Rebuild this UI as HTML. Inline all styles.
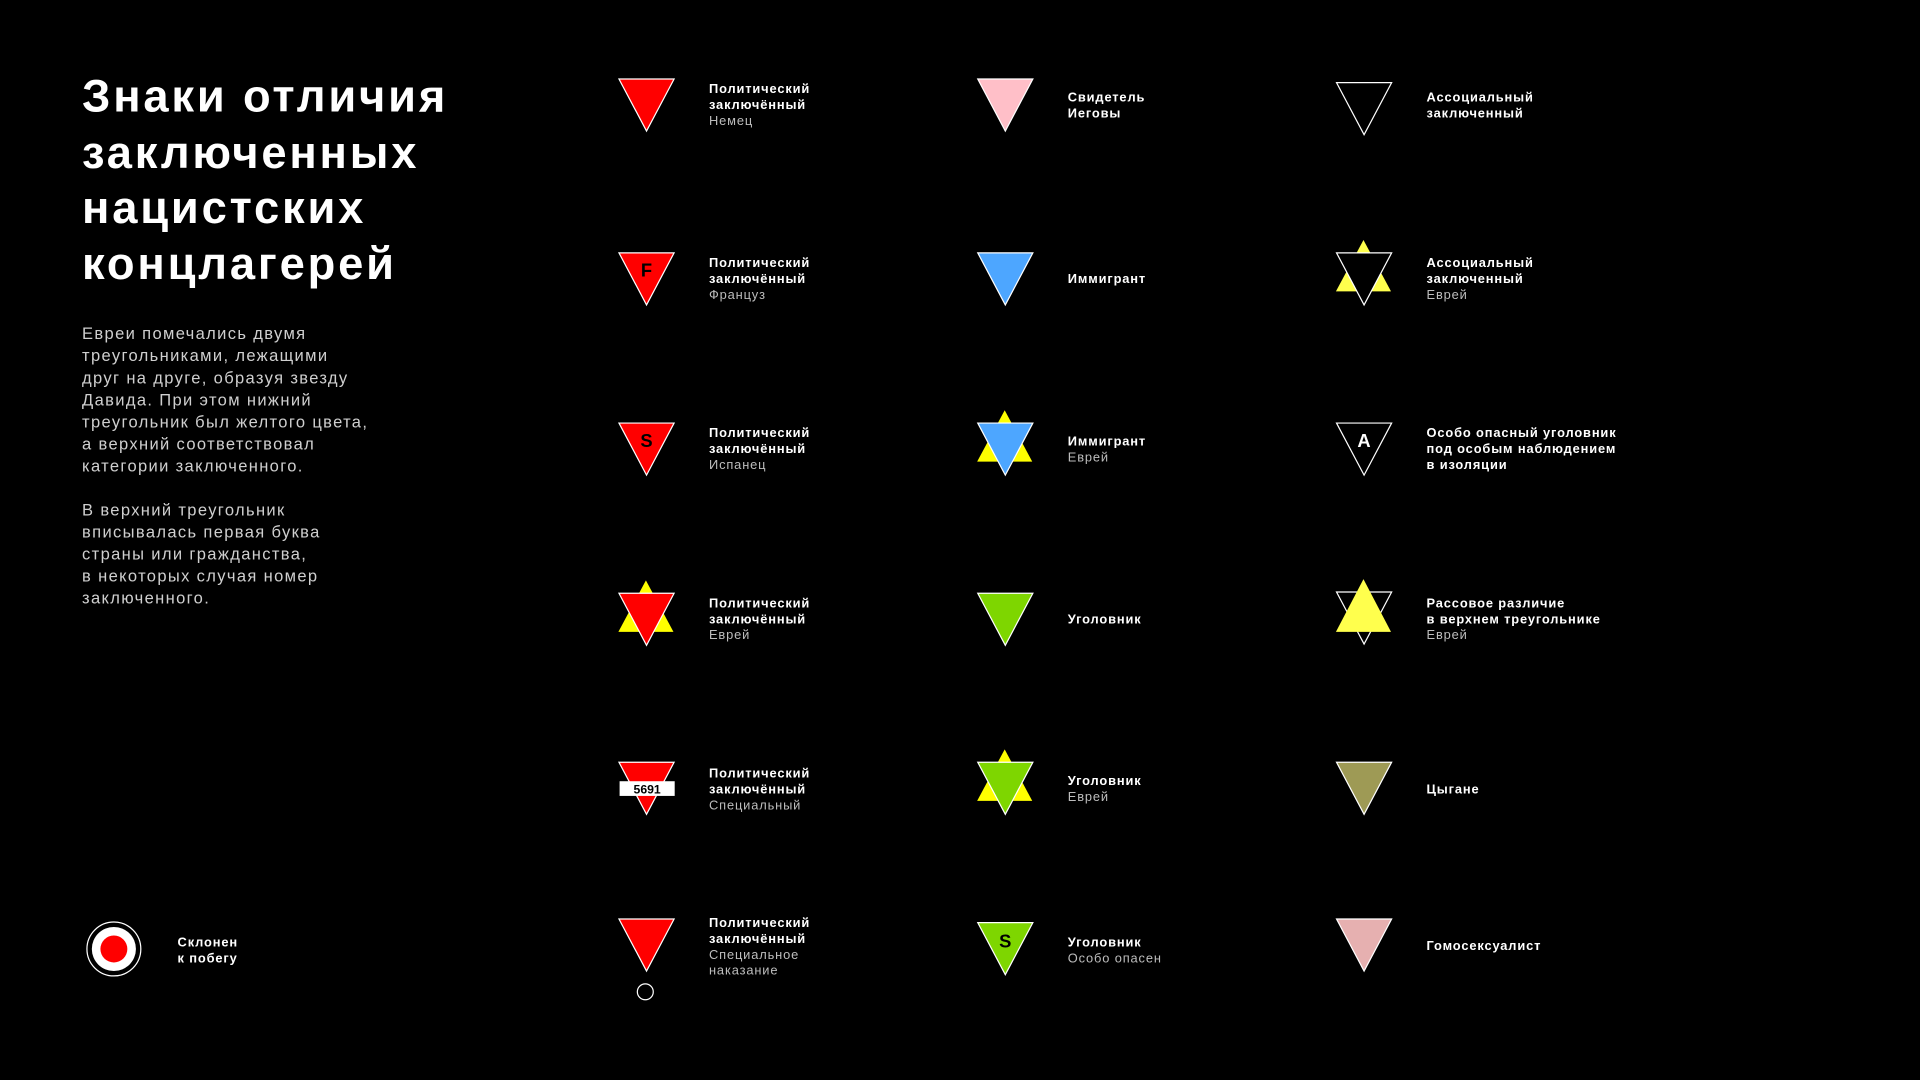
<!DOCTYPE html>
<html><head><meta charset="utf-8"><style>
html,body{margin:0;padding:0;background:#000;width:1920px;height:1080px;overflow:hidden}
#w{position:absolute;left:0;top:0;width:1568px;height:882px;transform:scale(1.22449);transform-origin:0 0;font-family:"Liberation Sans",sans-serif;color:#fff}
h1{position:absolute;left:67px;top:56px;margin:0;font-size:37px;line-height:45.5px;font-weight:bold;letter-spacing:2.3px}
.p{position:absolute;left:67px;font-size:13.5px;line-height:18px;color:#cfcfcf;letter-spacing:1.1px}
.t{position:absolute;font-size:10.5px;line-height:13px;font-weight:bold;letter-spacing:0.7px;margin-top:1px}
.t span{font-weight:normal;color:#bdbdbd}
svg{position:absolute;overflow:visible}
</style></head><body><div id="w">
<h1>Знаки отличия<br>заключенных<br>нацистских<br>концлагерей</h1>
<div class="p" style="top:264px">Евреи помечались двумя<br>треугольниками, лежащими<br>друг на друге, образуя звезду<br>Давида. При этом нижний<br>треугольник был желтого цвета,<br>а верхний соответствовал<br>категории заключенного.</div>
<div class="p" style="top:408px">В верхний треугольник<br>вписывалась первая буква<br>страны или гражданства,<br>в некоторых случая номер<br>заключенного.</div>

<svg style="left:70px;top:752px" width="46" height="46"><circle cx="23" cy="23" r="22" fill="none" stroke="#fff" stroke-width="1"/><circle cx="23" cy="23" r="18" fill="#fff"/><circle cx="23" cy="23" r="11" fill="#f00"/></svg>
<div class="t" style="left:145px;top:763px">Склонен<br>к побегу</div>

<!-- col1 -->
<svg style="left:505px;top:64px" width="46" height="44"><polygon points="0.5,0.5 45.5,0.5 23,43" fill="#f00" stroke="#fff" stroke-width="1"/></svg>
<div class="t" style="left:579px;top:66px">Политический<br>заключённый<br><span>Немец</span></div>

<svg style="left:505px;top:206px" width="46" height="44"><polygon points="0.5,0.5 45.5,0.5 23,43" fill="#f00" stroke="#fff" stroke-width="1"/><text x="23" y="20" font-size="15" font-weight="bold" text-anchor="middle" fill="#000" font-family="Liberation Sans">F</text></svg>
<div class="t" style="left:579px;top:208px">Политический<br>заключённый<br><span>Француз</span></div>

<svg style="left:505px;top:345px" width="46" height="44"><polygon points="0.5,0.5 45.5,0.5 23,43" fill="#f00" stroke="#fff" stroke-width="1"/><text x="23" y="20" font-size="15" font-weight="bold" text-anchor="middle" fill="#000" font-family="Liberation Sans">S</text></svg>
<div class="t" style="left:579px;top:347px">Политический<br>заключённый<br><span>Испанец</span></div>

<svg style="left:505px;top:474px" width="46" height="54"><polygon points="0,42 45,42 22.5,0" fill="#ff0"/><polygon points="0.5,10.5 45.5,10.5 23,53" fill="#f00" stroke="#fff" stroke-width="1"/></svg>
<div class="t" style="left:579px;top:486px">Политический<br>заключённый<br><span>Еврей</span></div>

<svg style="left:505px;top:622px" width="46" height="44"><polygon points="0.5,0.5 45.5,0.5 23,43" fill="#f00" stroke="#fff" stroke-width="1"/><rect x="1" y="16" width="45" height="12" fill="#fff"/><text x="23.5" y="26" font-size="10" font-weight="bold" text-anchor="middle" fill="#000" font-family="Liberation Sans">5691</text></svg>
<div class="t" style="left:579px;top:625px">Политический<br>заключённый<br><span>Специальный</span></div>

<svg style="left:505px;top:750px" width="46" height="44"><polygon points="0.5,0.5 45.5,0.5 23,43" fill="#f00" stroke="#fff" stroke-width="1"/></svg>
<svg style="left:519px;top:802px" width="16" height="16"><circle cx="8" cy="8" r="6.5" fill="none" stroke="#fff" stroke-width="1"/></svg>
<div class="t" style="left:579px;top:747px">Политический<br>заключённый<br><span>Специальное<br>наказание</span></div>

<!-- col2 -->
<svg style="left:798px;top:64px" width="46" height="44"><polygon points="0.5,0.5 45.5,0.5 23,43" fill="#ffbfc8" stroke="#fff" stroke-width="1"/></svg>
<div class="t" style="left:872px;top:73px">Свидетель<br>Иеговы</div>

<svg style="left:798px;top:206px" width="46" height="44"><polygon points="0.5,0.5 45.5,0.5 23,43" fill="#4da6ff" stroke="#fff" stroke-width="1"/></svg>
<div class="t" style="left:872px;top:221px">Иммигрант</div>

<svg style="left:798px;top:335px" width="46" height="54"><polygon points="0,42 45,42 22.5,0" fill="#ff0"/><polygon points="0.5,10.5 45.5,10.5 23,53" fill="#4da6ff" stroke="#fff" stroke-width="1"/></svg>
<div class="t" style="left:872px;top:354px">Иммигрант<br><span>Еврей</span></div>

<svg style="left:798px;top:484px" width="46" height="44"><polygon points="0.5,0.5 45.5,0.5 23,43" fill="#7ed600" stroke="#fff" stroke-width="1"/></svg>
<div class="t" style="left:872px;top:499px">Уголовник</div>

<svg style="left:798px;top:612px" width="46" height="54"><polygon points="0,42 45,42 22.5,0" fill="#ff0"/><polygon points="0.5,10.5 45.5,10.5 23,53" fill="#7ed600" stroke="#fff" stroke-width="1"/></svg>
<div class="t" style="left:872px;top:631px">Уголовник<br><span>Еврей</span></div>

<svg style="left:798px;top:753px" width="46" height="44"><polygon points="0.5,0.5 45.5,0.5 23,43" fill="#7ed600" stroke="#fff" stroke-width="1"/><text x="23" y="21" font-size="15" font-weight="bold" text-anchor="middle" fill="#000" font-family="Liberation Sans">S</text></svg>
<div class="t" style="left:872px;top:763px">Уголовник<br><span>Особо опасен</span></div>

<!-- col3 -->
<svg style="left:1091px;top:67px" width="46" height="44"><polygon points="0.5,0.5 45.5,0.5 23,43" fill="#000" stroke="#fff" stroke-width="1"/></svg>
<div class="t" style="left:1165px;top:73px">Ассоциальный<br>заключенный</div>

<svg style="left:1091px;top:196px" width="46" height="54"><polygon points="0,42 45,42 22.5,0" fill="#ffff4d"/><polygon points="0.5,10.5 45.5,10.5 23,53" fill="#000" stroke="#fff" stroke-width="1"/></svg>
<div class="t" style="left:1165px;top:208px">Ассоциальный<br>заключенный<br><span>Еврей</span></div>

<svg style="left:1091px;top:345px" width="46" height="44"><polygon points="0.5,0.5 45.5,0.5 23,43" fill="#000" stroke="#fff" stroke-width="1"/><text x="23" y="20" font-size="15" font-weight="bold" text-anchor="middle" fill="#fff" font-family="Liberation Sans">A</text></svg>
<div class="t" style="left:1165px;top:347px">Особо опасный уголовник<br>под особым наблюдением<br>в изоляции</div>

<svg style="left:1091px;top:473px" width="46" height="54"><polygon points="0.5,10.5 45.5,10.5 23,53" fill="#000" stroke="#fff" stroke-width="1"/><polygon points="0,43 45,43 22.5,0" fill="#ffff4d"/></svg>
<div class="t" style="left:1165px;top:486px">Рассовое различие<br>в верхнем треугольнике<br><span>Еврей</span></div>

<svg style="left:1091px;top:622px" width="46" height="44"><polygon points="0.5,0.5 45.5,0.5 23,43" fill="#9e9a55" stroke="#fff" stroke-width="1"/></svg>
<div class="t" style="left:1165px;top:638px">Цыгане</div>

<svg style="left:1091px;top:750px" width="46" height="44"><polygon points="0.5,0.5 45.5,0.5 23,43" fill="#e6b0b0" stroke="#fff" stroke-width="1"/></svg>
<div class="t" style="left:1165px;top:766px">Гомосексуалист</div>
</div></body></html>
